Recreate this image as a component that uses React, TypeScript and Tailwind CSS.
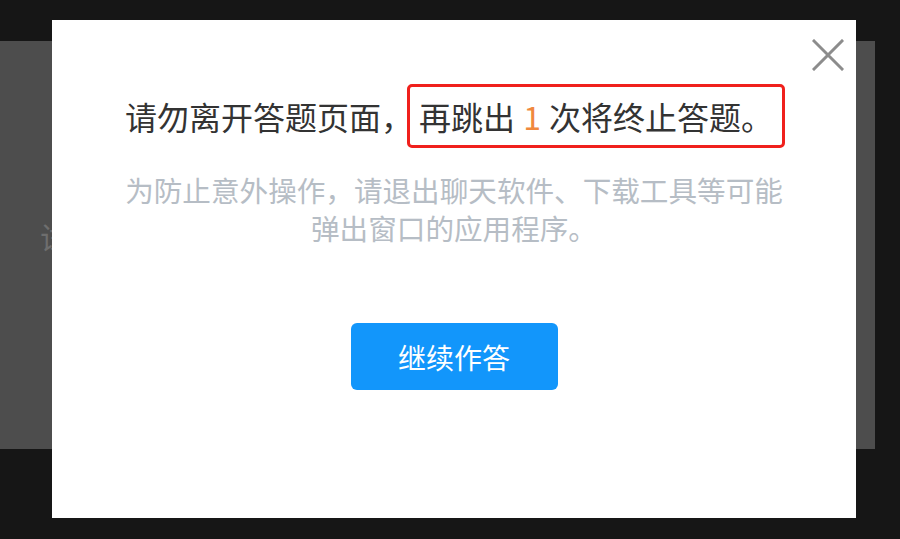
import React from "react";

export default function App() {
  const font = { fontFamily: '"Noto Sans CJK SC", "Noto Sans", sans-serif' };
  return (
    <div className="relative w-[900px] h-[539px] overflow-hidden bg-[#161616]" style={font}>
      <div className="pt-[41px]">
        <div className="w-[875px] h-[408px] bg-[#4d4d4d] pl-[40px] pt-[180px] text-[30px] leading-none text-[#6e6e6e]">
          试
        </div>
      </div>

      <div className="absolute left-[52px] top-[20px] w-[804px] h-[498px] bg-white flex flex-col items-center pt-[64px]">
        <button className="absolute right-[12px] top-[19px] w-[32px] h-[32px] flex items-center justify-center" aria-label="close">
          <svg width="32" height="32" viewBox="0 0 32 32">
            <path d="M2 2 L30 30 M30 2 L2 30" stroke="#8c8c8c" strokeWidth="3" strokeLinecap="square" fill="none" />
          </svg>
        </button>

        <div className="flex items-center text-[32px] leading-none text-[#333333] ml-[2px]">
          <span>请勿离开答题页面，</span>
          <span className="ml-[-6px] h-[64px] flex items-center border-[3px] border-[#f0201c] rounded-[5px] px-[9px]">
            再跳出<span className="text-[#f0883e] px-[8px]">1</span>次将终止答题。
          </span>
        </div>

        <div className="mt-[23px] w-[666px] text-center text-[28.6px] leading-[38px] text-[#b6bdc5]">
          为防止意外操作，请退出聊天软件、下载工具等可能弹出窗口的应用程序。
        </div>

        <button className="mt-[76px] w-[207px] h-[67px] rounded-[6px] bg-[#1296fb] text-white text-[28px] leading-none flex items-center justify-center">
          继续作答
        </button>
      </div>
    </div>
  );
}
